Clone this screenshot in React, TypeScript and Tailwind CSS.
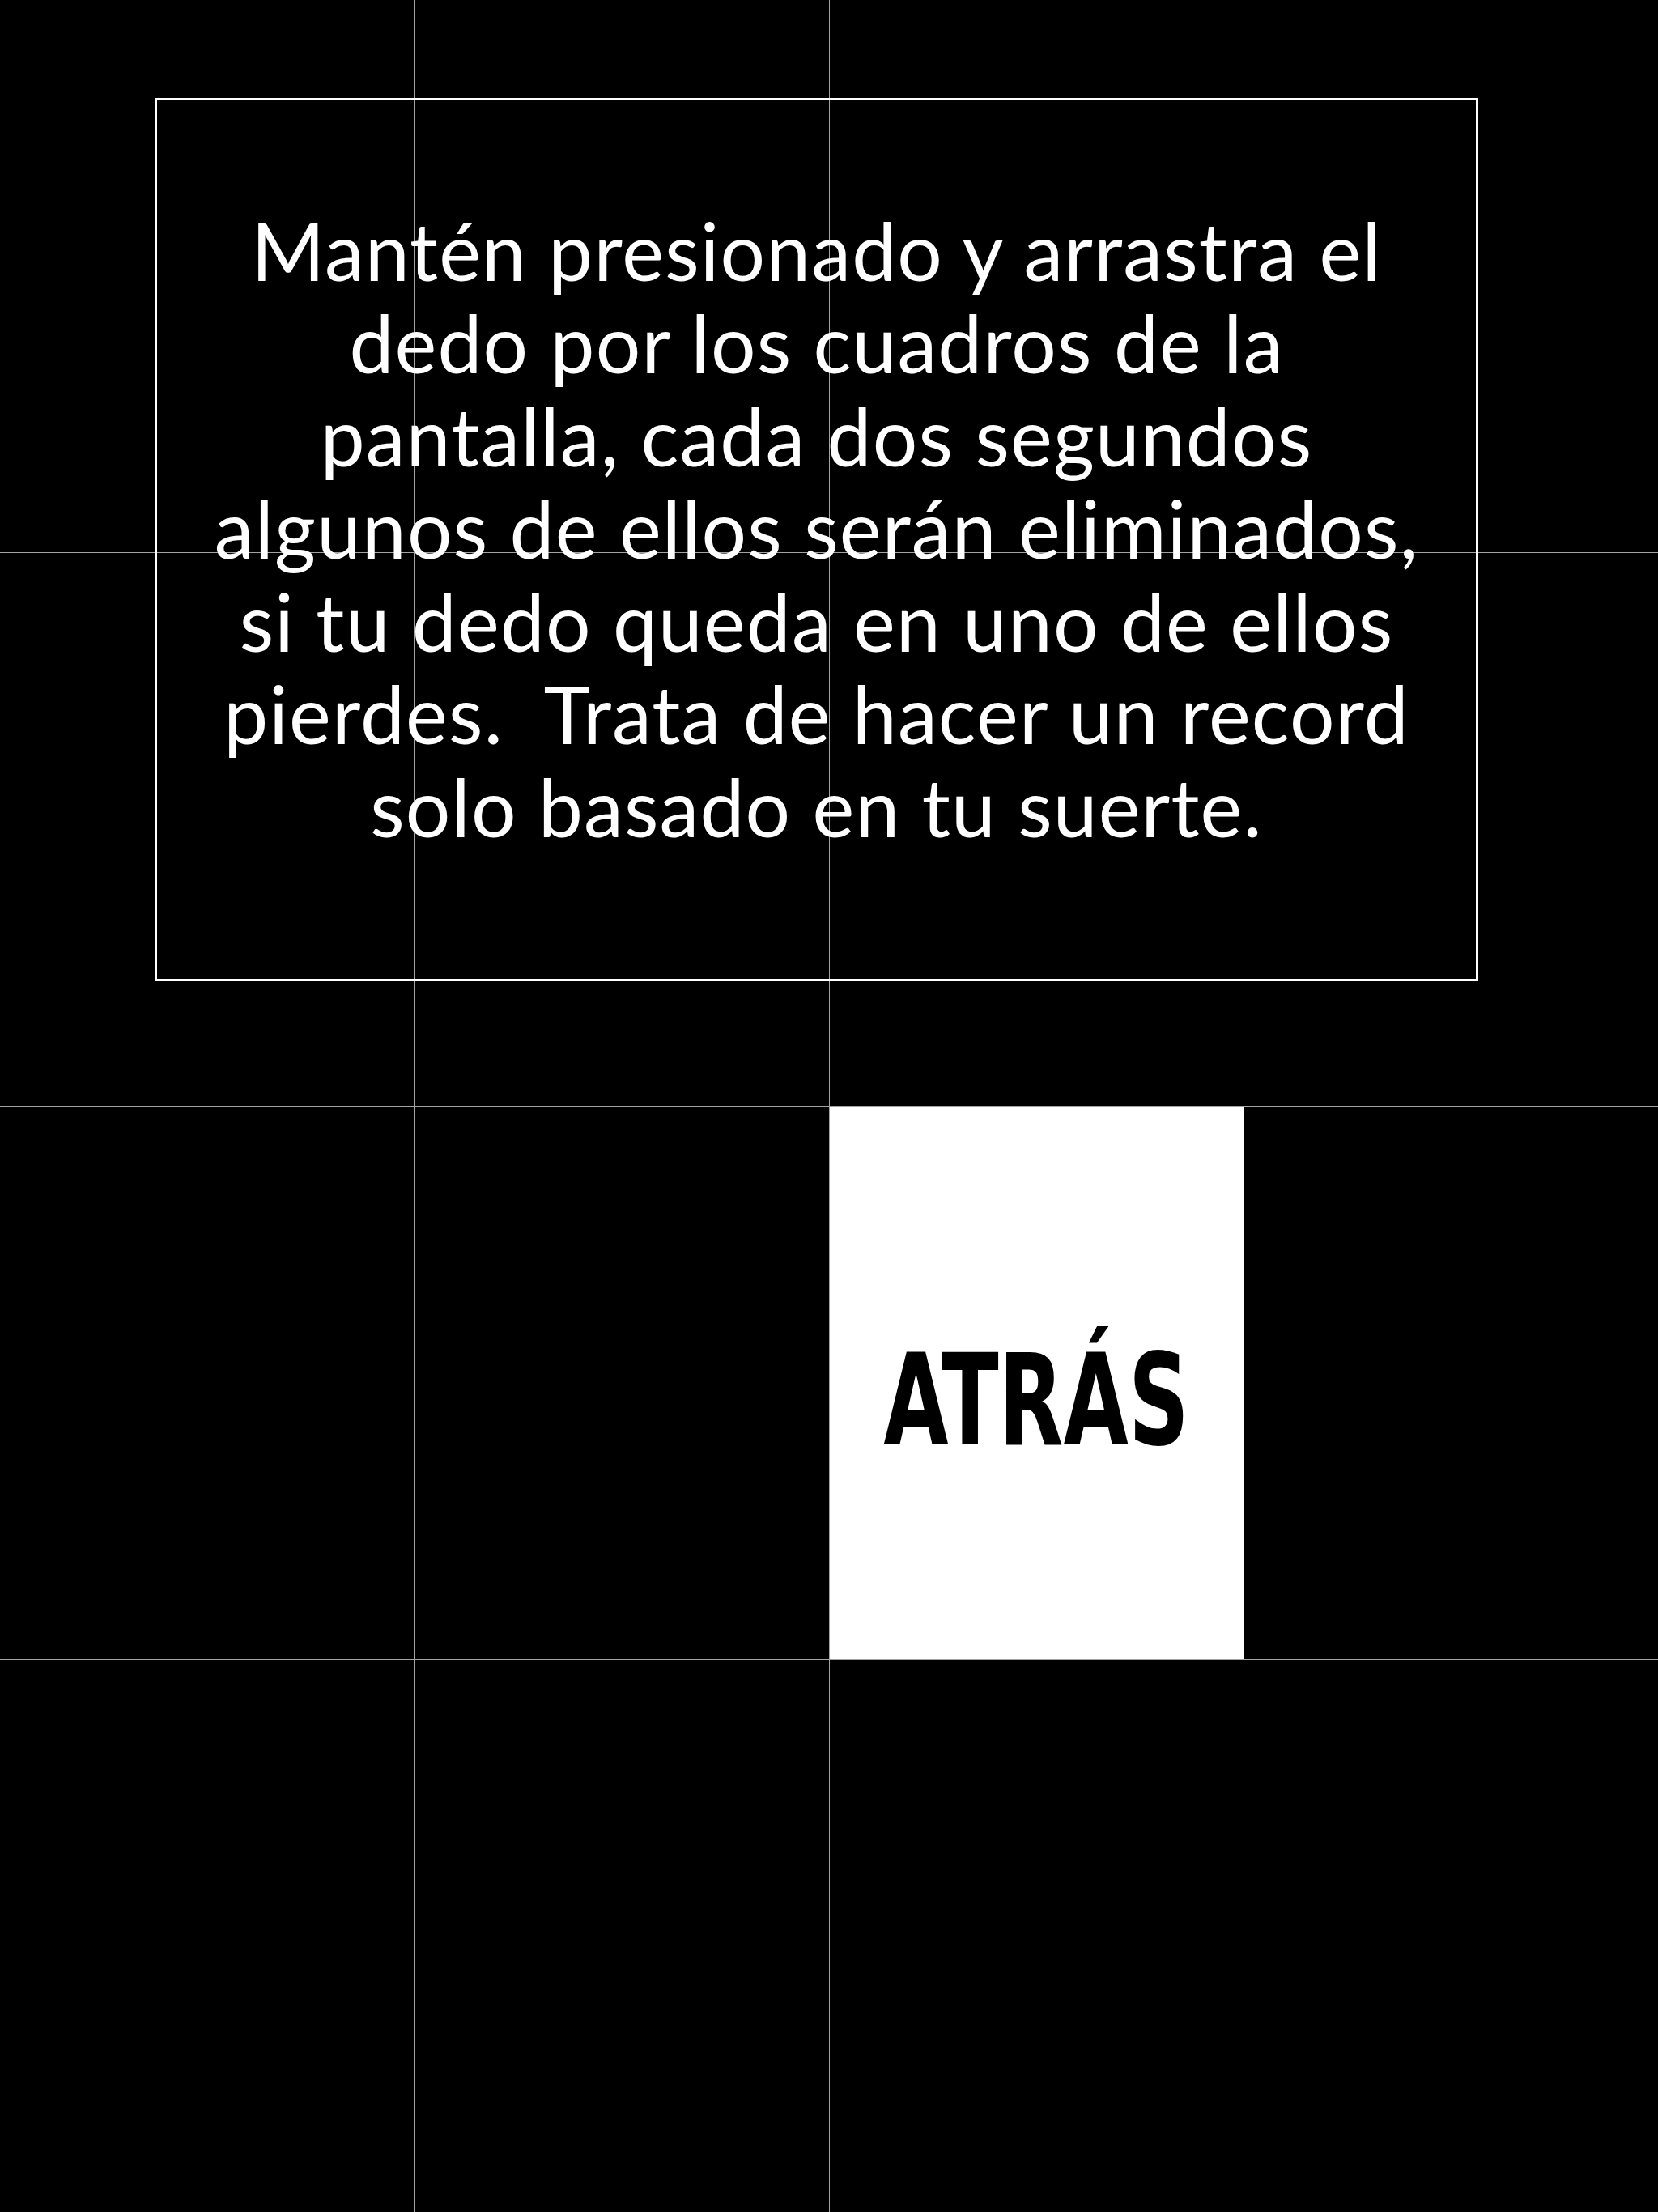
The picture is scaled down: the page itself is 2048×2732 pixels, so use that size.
const lines = [
  'Mantén presionado y arrastra el',
  'dedo por los cuadros de la',
  'pantalla, cada dos segundos',
  'algunos de ellos serán eliminados,',
  'si tu dedo queda en uno de ellos',
  'pierdes.\u00a0 Trata de hacer un record',
  'solo basado en tu suerte.',
];

export default function App() {
  const cells = Array.from({ length: 16 }, (_, i) => i);

  return (
    <div className="relative w-[2048px] h-[2732px] overflow-hidden bg-black">
      <div className="grid grid-cols-4 grid-rows-4 gap-px w-full h-full bg-[#a3a3a3]">
        {cells.map(i =>
          i === 10 ? (
            <div key={i} className="bg-white flex items-center justify-center pt-[44px]">
              <span className="block font-['Liberation_Sans_Narrow','DejaVu_Sans_Condensed',sans-serif] font-bold text-[156px] leading-none text-black scale-x-[0.74]">
                ATRÁS
              </span>
            </div>
          ) : (
            <div key={i} className="bg-black" />
          )
        )}
      </div>

      <div className="absolute left-[191px] top-[121px] w-[1635px] h-[1091px] border-[3px] border-white flex flex-col items-center justify-center pb-[28px]">
        {lines.map(line => (
          <p
            key={line}
            className="font-['Lato',sans-serif] text-white text-[98px] leading-[114.5px] tracking-[1.2px] text-center whitespace-nowrap"
          >
            {line}
          </p>
        ))}
      </div>
    </div>
  );
}
